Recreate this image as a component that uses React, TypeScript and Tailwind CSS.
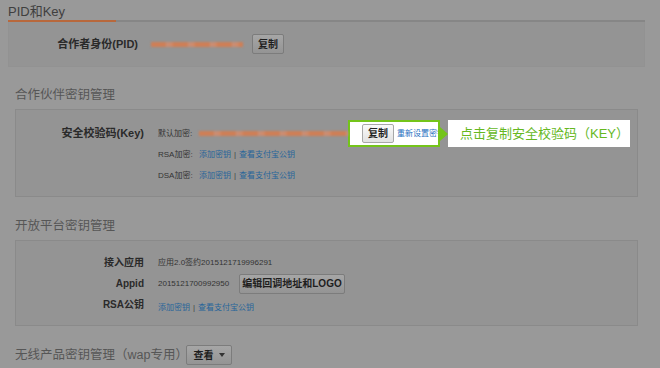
import React from 'react';

const DimButton = ({ children, className = '' }: { children: React.ReactNode; className?: string }) => (
  <div
    className={`h-[20px] flex items-center justify-center rounded-[2px] border border-[#7c7c7c] bg-gradient-to-b from-[#a6a6a6] to-[#949494] text-[10px] font-bold text-[#1e1e1e] ${className}`}
  >
    {children}
  </div>
);

const Blur = ({ className = '' }: { className?: string }) => (
  <div className={`h-[5px] blur-[1px] bg-[repeating-linear-gradient(90deg,#cf7f56_0px,#cf7f56_14px,#c99078_16px,#d28763_22px)] ${className}`} />
);

const Links = () => (
  <span className="text-[8px] text-[#26649a]">
    添加密钥<span className="mx-[3px] text-[#444]">|</span>查看支付宝公钥
  </span>
);

export default function App() {
  return (
    <div className="w-[660px] h-[368px] overflow-hidden bg-[#999999] font-['Liberation_Sans','Noto_Sans_CJK_SC',sans-serif] text-[#2a2a2a]">
      {/* PID and Key */}
      <div className="pl-[8px] pr-[15px]">
        <div className="h-[20px] pt-[5px] text-[13px] leading-[14px] text-[#3f3f3f]">PID和Key</div>
        <div className="flex h-[2px]">
          <div className="w-[108px] bg-[#b8683c]" />
          <div className="flex-1 bg-[#868686]" />
        </div>
        <div className="h-[45px] border border-[#929292] border-t-0 bg-[#949494] flex items-center">
          <div className="w-[129px] text-right text-[11px] font-bold">合作者身份(PID)</div>
          <Blur className="ml-[13px] w-[92px]" />
          <DimButton className="ml-[9px] w-[32px]">复制</DimButton>
        </div>
      </div>

      <div className="pl-[15px] pr-[22px]">
        {/* Partner keys */}
        <div className="h-[42px] pt-[21px] text-[12.5px] leading-[14px] text-[#565656]">合作伙伴密钥管理</div>
        <div className="h-[88px] border border-[#8a8a8a] bg-[#949494] pt-[13px] flex flex-col">
          <div className="h-[21px] flex items-center">
            <div className="w-[128px] text-right text-[11px] font-bold">安全校验码(Key)</div>
            <span className="ml-[14px] w-[41px] text-[8px] text-[#333]">默认加密:</span>
            <Blur className="w-[149px]" />
            <div className="h-[27px] w-[92px] shrink-0 border-2 border-[#74c41a] bg-white flex items-center overflow-hidden">
              <div className="ml-[12px] h-[19px] w-[32px] shrink-0 flex items-center justify-center rounded-[2px] border border-[#a8a8a8] bg-gradient-to-b from-[#fafafa] to-[#e2e2e2] text-[10px] font-bold text-[#222]">
                复制
              </div>
              <span className="ml-[3px] whitespace-nowrap text-[8px] text-[#1f6fc0]">重新设置密钥</span>
            </div>
            <div className="h-0 w-0 border-y-[7px] border-y-transparent border-l-[8px] border-l-[#74c41a]" />
            <div className="h-[27px] w-[182px] shrink-0 bg-white flex items-center pl-[12px] text-[13px] text-[#66b81f] whitespace-nowrap">
              点击复制安全校验码（KEY）
            </div>
          </div>
          <div className="h-[21px] flex items-center">
            <div className="w-[128px]" />
            <span className="ml-[14px] w-[41px] text-[8px] text-[#333]">RSA加密:</span>
            <Links />
          </div>
          <div className="h-[21px] flex items-center">
            <div className="w-[128px]" />
            <span className="ml-[14px] w-[41px] text-[8px] text-[#333]">DSA加密:</span>
            <Links />
          </div>
        </div>

        {/* Open platform keys */}
        <div className="h-[43px] pt-[22px] text-[12.5px] leading-[14px] text-[#565656]">开放平台密钥管理</div>
        <div className="h-[86px] border border-[#8a8a8a] bg-[#949494] pt-[11px] flex flex-col">
          <div className="h-[21px] flex items-center">
            <div className="w-[128px] text-right text-[10px] font-bold">接入应用</div>
            <span className="ml-[14px] text-[8px] text-[#333]">应用2.0签约2015121719996291</span>
          </div>
          <div className="h-[21px] flex items-center">
            <div className="w-[128px] text-right text-[10px] font-bold">Appid</div>
            <span className="ml-[14px] w-[81px] text-[8px] text-[#333]">2015121700992950</span>
            <DimButton className="w-[106px]">编辑回调地址和LOGO</DimButton>
          </div>
          <div className="h-[21px] flex items-center">
            <div className="w-[128px] text-right text-[10px] font-bold">RSA公钥</div>
            <span className="ml-[14px]">
              <Links />
            </span>
          </div>
        </div>

        {/* Wireless */}
        <div className="mt-[19px] h-[20px] flex items-center">
          <span className="w-[171px] text-[12.5px] text-[#565656] whitespace-nowrap">无线产品密钥管理（wap专用）</span>
          <DimButton className="w-[46px] gap-[5px]">
            查看
            <span className="h-0 w-0 border-x-[3.5px] border-x-transparent border-t-[4px] border-t-[#333]" />
          </DimButton>
        </div>
      </div>
    </div>
  );
}
